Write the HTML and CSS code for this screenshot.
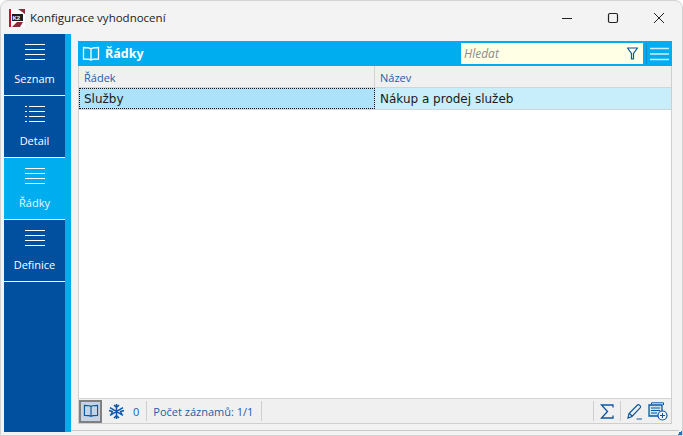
FILE: index.html
```html
<!DOCTYPE html>
<html lang="cs">
<head>
<meta charset="utf-8">
<title>Konfigurace vyhodnocení</title>
<link rel="stylesheet" href="styles.css">
</head>
<body>
<svg class="defs" width="0" height="0" aria-hidden="true">
  <symbol id="lines" viewBox="0 0 20 17"><path d="M0 .5h20M0 5.5h20M0 10.5h20M0 15.5h20" stroke="#fff" fill="none"/></symbol>
  <symbol id="book" viewBox="0 0 18 16"><path d="M9 3C8 1.8 6 1.5 1.500 1.500v11.500c4 0 6.500 0 7.500 1.200 1-1.200 3.500-1.200 7.500-1.200V1.500C12 1.500 10 1.800 9 3zM9 3v11" fill="none" stroke="currentColor" stroke-width="1.300"/></symbol>
</svg>
<div class="window">
  <header class="titlebar">
    <svg class="logo" width="16" height="18" viewBox="0 0 16 18"><rect width="16" height="18" fill="#fff"/><rect width="2" height="18" fill="#c8102e"/><path d="M9 0h7v5zM3 18l5-5h6l-3 5z" fill="#8a2a3a"/><rect x="3" y="5" width="11" height="7" fill="#1c1c22"/><text x="3.500" y="11" class="logo-text">K2</text></svg>
    <span class="title">Konfigurace vyhodnocení</span>
    <div class="winbtns">
      <svg width="12" height="12" viewBox="0 0 12 12"><path d="M1 6.500h10" stroke="#222" fill="none"/></svg>
      <svg width="12" height="12" viewBox="0 0 12 12"><rect x="1.500" y="1.500" width="9" height="9" rx="1.500" stroke="#222" stroke-width="1.200" fill="none"/></svg>
      <svg width="12" height="12" viewBox="0 0 12 12"><path d="M1 1l10 10M11 1L1 11" stroke="#222" fill="none"/></svg>
    </div>
  </header>
  <div class="app">
    <nav class="sidebar">
      <a class="tab"><svg class="tab-ic"><use href="#lines"/></svg><span>Seznam</span></a>
      <a class="tab"><svg class="tab-ic" viewBox="0 0 20 17"><path d="M4 .5h16M4 5.500h16M4 10.500h16M4 15.500h16M0 .5h2M0 5.500h2M0 10.500h2M0 15.500h2" stroke="#fff" fill="none"/></svg><span>Detail</span></a>
      <a class="tab active"><svg class="tab-ic"><use href="#lines"/></svg><span>Řádky</span></a>
      <a class="tab"><svg class="tab-ic"><use href="#lines"/></svg><span>Definice</span></a>
    </nav>
    <div class="strip"></div>
    <main class="content">
      <div class="panel">
        <div class="panel-head">
          <svg class="head-book" width="18" height="16"><use href="#book"/></svg>
          <strong class="head-title">Řádky</strong>
          <div class="search">
            <span class="search-ph">Hledat</span>
            <svg width="11" height="13" viewBox="0 0 11 13"><path d="M.5 1h10L6.500 6.500V12h-2V6.500z" fill="none" stroke="#0b57a4" stroke-width="1.200"/></svg>
          </div>
          <span class="head-sep"></span>
          <svg class="head-menu" width="19" height="14" viewBox="0 0 19 14"><path d="M0 1.500h19M0 7h19M0 12.500h19" stroke="#cdeffd" stroke-width="1.400" fill="none"/></svg>
        </div>
        <div class="grid-head">
          <div class="col col-a">Řádek</div>
          <div class="col col-b">Název</div>
        </div>
        <div class="row">
          <div class="cell cell-a">Služby</div>
          <div class="cell cell-b">Nákup a prodej služeb</div>
        </div>
        <div class="grid-empty"></div>
        <footer class="status">
          <span class="st-book"><svg width="18" height="16"><use href="#book"/></svg></span>
          <svg class="st-snow" width="17" height="17" viewBox="0 0 17 17"><path d="M8.500 1v15M2 4.700l13 7.600M15 4.700L2 12.300M6 2l2.500 2.500L11 2M6 15l2.500-2.500L11 15M1 7.500l3.300 1L3 12M16 7.500l-3.300 1L14 12" stroke="#0b57a4" stroke-width="1.500" fill="none"/></svg>
          <span class="st-num">0</span>
          <span class="st-sep"></span>
          <span class="st-text">Počet záznamů: 1/1</span>
          <span class="st-sep"></span>
          <span class="st-fill"></span>
          <span class="st-sep"></span>
          <svg class="st-ic" width="14" height="15" viewBox="0 0 14 15"><path d="M13 3.500V1H1.500l6 6.500-6 6.500H13v-2.500" fill="none" stroke="#0b57a4" stroke-width="1.300"/></svg>
          <span class="st-sep"></span>
          <svg class="st-ic st-pen" width="16" height="17" viewBox="0 0 16 17"><path d="M1 15l1-4.500L10.500 2c1.200-1.200 4 1.200 2.800 2.700L5 13.500zM2.500 10.500l3 3M9.500 16H15" fill="none" stroke="#0b57a4" stroke-width="1.200"/></svg>
          <svg class="st-ic last" width="20" height="19" viewBox="0 0 20 19"><path d="M3.500 2.500V.8h12V3" fill="none" stroke="#0b57a4"/><path d="M1 3h13v11H1z" fill="#d3e3f2" stroke="#0b57a4" stroke-width="1.300"/><path d="M3 6h9M3 8.500h9M3 11h6" stroke="#0b57a4" fill="none"/><circle cx="14.500" cy="13.500" r="4.500" fill="#f0f0f0" stroke="#0b57a4" stroke-width="1.200"/><path d="M12 13.500h5M14.500 11v5" stroke="#0b57a4" fill="none"/></svg>
        </footer>
      </div>
    </main>
  </div>
  <span class="grip"></span>
</div>
</body>
</html>
```
FILE: styles.css
```css
* { box-sizing: border-box; }
html, body { margin: 0; height: 100%; }
body { background: #fff; font-family: "Open Sans", sans-serif; overflow: hidden; }
.defs { position: absolute; }
.window { position: relative; width: 683px; height: 436px; display: flex; flex-direction: column; background: #f3f3f3; border: 1px solid #d2d2d2; border-radius: 8px 8px 0 0; padding: 0 3px 3px; }
.titlebar { height: 33px; flex: none; display: flex; align-items: center; padding-left: 5px; }
.logo { flex: none; margin-top: 1px; }
.logo-text { font: bold 6px "Liberation Sans", sans-serif; fill: #fff; }
.title { font-size: 11.500px; color: #1a1a1a; margin-left: 5px; }
.winbtns { margin-left: auto; display: flex; gap: 34px; padding-right: 14px; align-items: center; }
.app { flex: 1; display: flex; min-height: 0; }
.sidebar { width: 61px; background: #00509f; display: flex; flex-direction: column; flex: none; }
.tab { height: 62px; border-bottom: 1px solid #fff; display: flex; flex-direction: column; align-items: center; color: #fff; font-size: 11px; font-weight: 500; padding-top: 10px; }
.tab.active { background: #00aeef; color: #e8f8ff; }
.tab-ic { width: 20px; height: 17px; margin-bottom: 10px; flex: none; }
.strip { width: 6px; background: #00aeef; flex: none; }
.content { flex: 1; padding: 7px 8px 6px 7px; border-bottom: 1px solid #c8c8c8; margin-bottom: 1px; min-width: 0; }
.panel { height: 100%; display: flex; flex-direction: column; border: 1px solid #cfcfcf; border-top: 0; background: #fff; margin: 0 -1px 0 0; }
.panel-head { height: 25px; margin: 0 -1px; flex: none; background: #00aeef; display: flex; align-items: center; color: #fff; padding-left: 4px; }
.head-book { color: #fff; flex: none; }
.head-title { font-size: 12.500px; font-weight: 700; margin-left: 5px; }
.search { margin-left: auto; width: 182px; height: 21px; background: #ffffe6; display: flex; align-items: center; justify-content: space-between; padding: 0 5px 0 3px; }
.search-ph { font-size: 12px; font-style: italic; color: #8c8c8c; }
.head-sep { width: 1px; height: 21px; background: #0a8fd0; margin-left: 3px; flex: none; }
.head-menu { margin: 0 3px 0 3px; flex: none; }
.grid-head { height: 22px; flex: none; display: flex; background: #f0f0f0; border-bottom: 1px solid #d4d4d4; font-size: 11px; color: #1c5ea8; }
.col { padding: 1px 5px 0; display: flex; align-items: center; }
.col-a { width: 296px; border-right: 1px solid #d4d4d4; }
.row { height: 22px; flex: none; display: flex; font-family: "DejaVu Sans", sans-serif; font-size: 12px; color: #1a1a1a; background: #c9eefb; border-bottom: 1px solid #d4d4d4; }
.cell { display: flex; align-items: center; padding: 0 5px; }
.cell-a { width: 296px; background: #ade3fa; outline: 1px dotted #111; outline-offset: -1px; }
.grid-empty { flex: 1; background: #fff; }
.status { height: 25px; flex: none; background: #f0f0f0; border-top: 1px solid #d4d4d4; display: flex; align-items: center; font-size: 11px; color: #1c5ea8; }
.st-book { width: 23px; height: 23px; background: #c5d3e2; border: 2px solid #808080; color: #0b57a4; display: flex; align-items: center; justify-content: center; flex: none; }
.st-book svg { width: 16px; height: 14px; }
.st-snow { margin-left: 6px; flex: none; }
.st-num { margin: 0 7px 0 8px; }
.st-sep { width: 1px; height: 20px; background: #cfcfcf; flex: none; }
.st-text { padding: 0 8px 0 6px; }
.st-fill { flex: 1; }
.st-ic { margin: 0 6px; flex: none; }
.st-ic.st-pen { margin-right: 5px; }
.st-ic.last { margin: 0 3px 0 0; }
.grip { position: absolute; right: 0; bottom: 0; width: 5px; height: 5px; background: linear-gradient(135deg, transparent 50%, #2a6db0 50%); }
```
